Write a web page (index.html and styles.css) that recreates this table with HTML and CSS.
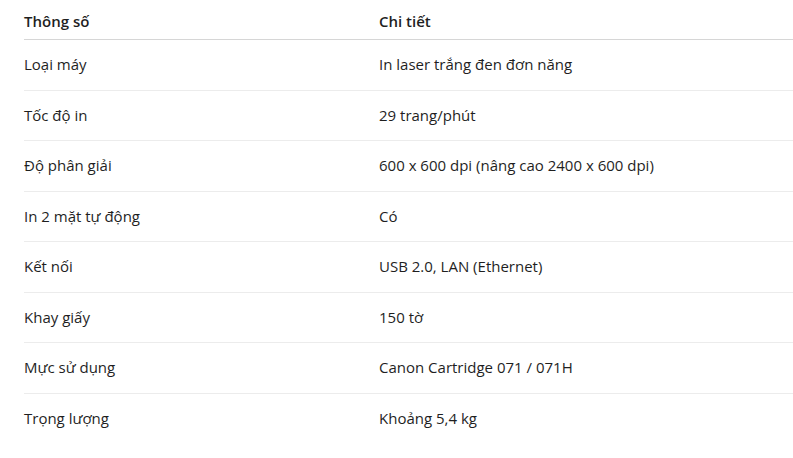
FILE: index.html
```html
<!DOCTYPE html>
<html lang="vi">
<head>
<meta charset="utf-8">
<title>Thông số</title>
<link rel="stylesheet" href="styles.css">
</head>
<body>
<table class="spec">
  <colgroup><col class="c1"><col class="c2"></colgroup>
  <thead>
    <tr><th>Thông số</th><th>Chi tiết</th></tr>
  </thead>
  <tbody>
    <tr><td>Loại máy</td><td>In laser trắng đen đơn năng</td></tr>
    <tr><td>Tốc độ in</td><td>29 trang/phút</td></tr>
    <tr><td>Độ phân giải</td><td>600 x 600 dpi (nâng cao 2400 x 600 dpi)</td></tr>
    <tr><td>In 2 mặt tự động</td><td>Có</td></tr>
    <tr><td>Kết nối</td><td>USB 2.0, LAN (Ethernet)</td></tr>
    <tr><td>Khay giấy</td><td>150 tờ</td></tr>
    <tr><td>Mực sử dụng</td><td>Canon Cartridge 071 / 071H</td></tr>
    <tr><td>Trọng lượng</td><td>Khoảng 5,4 kg</td></tr>
  </tbody>
</table>
</body>
</html>
```

FILE: styles.css
```css
html, body {
  margin: 0;
  padding: 0;
  background: #ffffff;
}
body {
  padding-left: 24px;
  font-family: "Open Sans", "Noto Sans", sans-serif;
  font-size: 15px;
  color: #1f1f1f;
}
.spec {
  border-collapse: collapse;
  table-layout: fixed;
  width: 769px;
}
.c1 { width: 355px; }
.spec th {
  text-align: left;
  font-weight: 600;
  line-height: 20px;
  padding: 11px 0 8px 0;
  border-bottom: 1px solid #d6d6d6;
}
.spec td {
  line-height: 21.5px;
  padding: 14px 0;
  border-bottom: 1px solid #ececec;
}
.spec tbody tr:last-child td {
  border-bottom: none;
}
```
